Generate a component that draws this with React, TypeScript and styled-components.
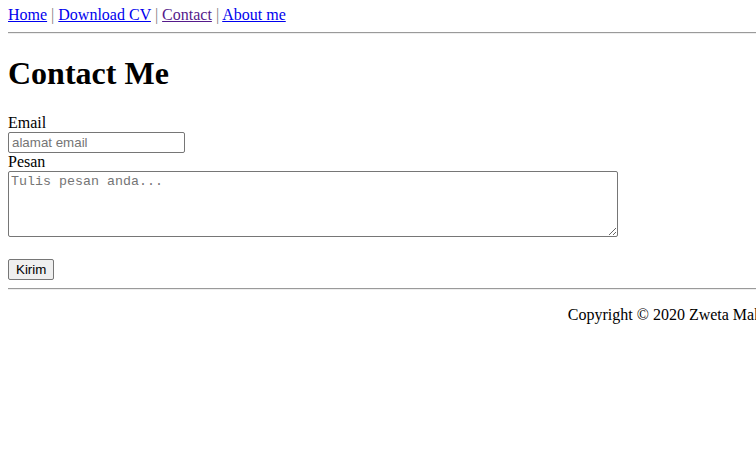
import React from "react";
import styled, { createGlobalStyle } from "styled-components";

const Global = createGlobalStyle`
  html { overflow: hidden; }
  body {
    margin: 6px 0 8px 8px;
    font-family: "Liberation Serif", "Times New Roman", serif;
    font-size: 16px;
    color: #000;
    background: #fff;
  }
`;

const Page = styled.div`
  width: 1346px;
`;

const Nav = styled.nav`
  line-height: normal;
`;

const NavLink = styled.a<{ $visited?: boolean }>`
  color: ${(p) => (p.$visited ? "#551a8b" : "#0000ee")};
  text-decoration: underline;
`;

const Sep = styled.span`
  color: #808080;
`;

const Rule = styled.hr`
  margin: 8px 0;
  border: none;
  border-top: 1px solid #9a9a9a;
  border-bottom: 1px solid #eee;
  height: 0;
`;

const Title = styled.h1`
  font-size: 32px;
  font-weight: bold;
  margin: 21.44px 0;
`;

const Form = styled.form`
  display: flex;
  flex-direction: column;
  align-items: flex-start;
`;

const Label = styled.label`
  display: block;
`;

const TextInput = styled.input`
  box-sizing: border-box;
  width: 177px;
  height: 21px;
  padding: 1px 3px;
  border: 1px solid #767676;
  border-radius: 2px;
  font-family: "Liberation Sans", Arial, sans-serif;
  font-size: 13.333px;
  &::placeholder { color: #757575; }
`;

const TextArea = styled.textarea`
  box-sizing: border-box;
  width: 610px;
  height: 66px;
  padding: 2px;
  border: 1px solid #767676;
  border-radius: 2px;
  font-family: "Liberation Mono", "Courier New", monospace;
  font-size: 13.333px;
  margin: 0 0 22px;
  &::placeholder { color: #757575; }
`;

const Button = styled.button`
  box-sizing: border-box;
  height: 21px;
  padding: 1px 7px;
  border: 1px solid #767676;
  border-radius: 2px;
  background: #efefef;
  font-family: "Liberation Sans", Arial, sans-serif;
  font-size: 13.333px;
  color: #000;
`;

const Footer = styled.footer`
  text-align: center;
  padding-top: 8px;
`;

export default function App() {
  return (
    <>
      <Global />
      <Page>
        <Nav>
          <NavLink href="#">Home</NavLink> <Sep>|</Sep>{" "}
          <NavLink href="#">Download CV</NavLink> <Sep>|</Sep>{" "}
          <NavLink href="#" $visited>
            Contact
          </NavLink>{" "}
          <Sep>|</Sep> <NavLink href="#">About me</NavLink>
        </Nav>
        <Rule />
        <Title>Contact Me</Title>
        <Form onSubmit={(e) => e.preventDefault()}>
          <Label htmlFor="email">Email</Label>
          <TextInput id="email" type="email" placeholder="alamat email" />
          <Label htmlFor="pesan">Pesan</Label>
          <TextArea id="pesan" placeholder="Tulis pesan anda..." />
          <Button type="submit">Kirim</Button>
        </Form>
        <Rule />
        <Footer>Copyright © 2020 Zweta Maharani</Footer>
      </Page>
    </>
  );
}
